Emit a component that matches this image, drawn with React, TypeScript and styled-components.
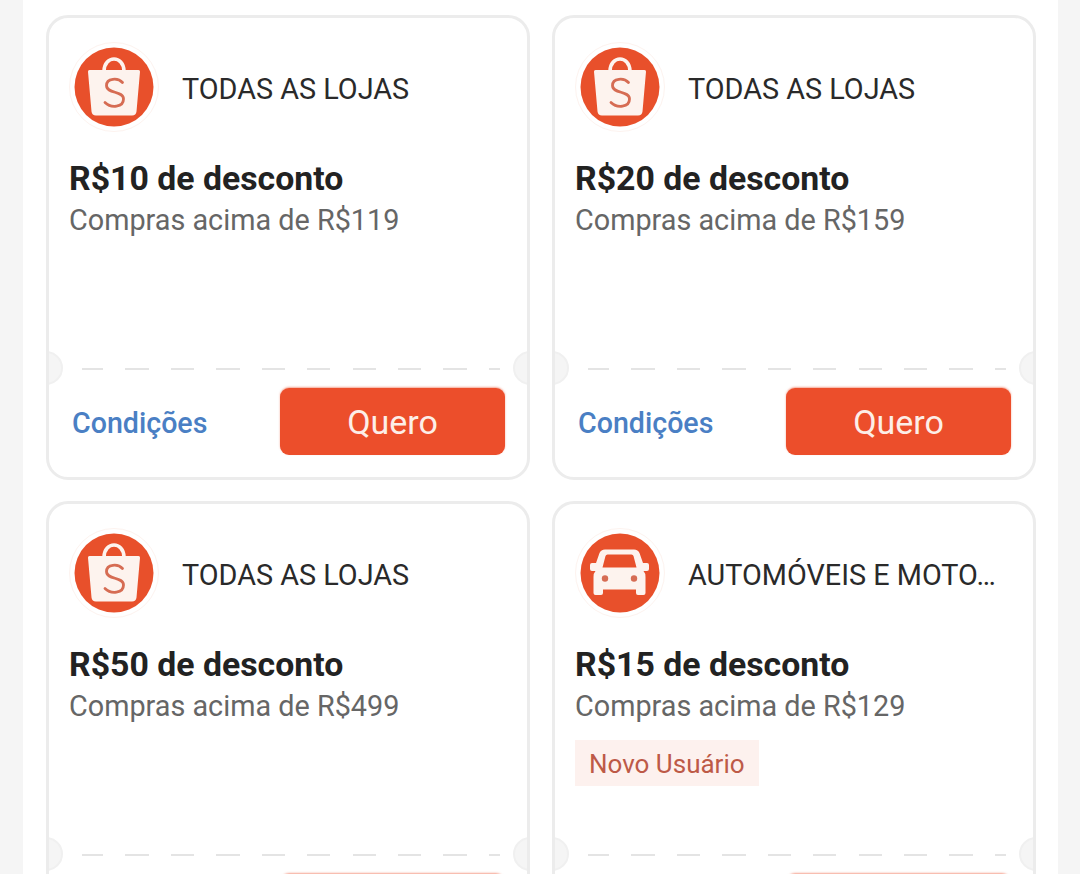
import React from "react";
import styled, { createGlobalStyle } from "styled-components";

const Global = createGlobalStyle`
  html, body { margin: 0; padding: 0; background: #f5f5f5; }
  body { font-family: Roboto, "Liberation Sans", sans-serif; }
`;

const Viewport = styled.div`
  width: 1080px;
  height: 874px;
  overflow: hidden;
  background: #f5f5f5;
`;

const Sheet = styled.main`
  width: 1035px;
  min-height: 874px;
  margin-left: 23px;
  padding: 15px 22px 0 23px;
  box-sizing: border-box;
  background: #fff;
  display: grid;
  grid-template-columns: 484px 484px;
  grid-auto-rows: 465px;
  column-gap: 22px;
  row-gap: 21px;
`;

const Card = styled.article`
  position: relative;
  box-sizing: border-box;
  border: 3px solid #ececec;
  border-radius: 22px;
  background: #fff;
  display: flex;
  flex-direction: column;
  overflow: hidden;
`;

const Body = styled.div`
  height: 350px;
  box-sizing: border-box;
  padding: 24px 21px 0 20px;
  flex: none;
`;

const Head = styled.div`
  display: flex;
  align-items: center;
  gap: 23px;
  height: 90px;
`;

const LogoRing = styled.div`
  flex: none;
  width: 90px;
  height: 90px;
  box-sizing: border-box;
  border-radius: 50%;
  border: 1px solid #fdf3ef;
  display: flex;
  align-items: center;
  justify-content: center;
`;

const Category = styled.div`
  margin-top: 3px;
  font-size: 28.8px;
  line-height: 34px;
  color: #2a2a2a;
  white-space: nowrap;
`;

const Title = styled.h2`
  margin: 26px 0 0;
  font-size: 33.8px;
  line-height: 42px;
  font-weight: 700;
  color: #222;
`;

const Sub = styled.p`
  margin: -1px 0 0;
  font-size: 28.8px;
  line-height: 42px;
  color: #666;
`;

const Tag = styled.span`
  display: inline-block;
  margin-top: 13px;
  padding: 0 14px;
  height: 46px;
  line-height: 49px;
  font-size: 26px;
  color: #bd5a47;
  background: #fdf1ee;
`;

const Divider = styled.div`
  position: relative;
  height: 0;
  flex: none;
  margin: 0 27px 0 33px;
  border-top: 2px solid transparent;
  border-image: repeating-linear-gradient(90deg, #e4e4e4 0 23px, transparent 23px 45px) 2;
`;

const Notch = styled.span<{ $side: "left" | "right" }>`
  position: absolute;
  top: 333px;
  ${(p) => p.$side}: -20px;
  width: 30px;
  height: 30px;
  border-radius: 50%;
  background: #f5f5f5;
  border: 2px solid #f0f0f0;
`;

const Footer = styled.div`
  flex: 1;
  display: flex;
  align-items: flex-start;
  justify-content: space-between;
  padding: 18px 22px 0 23px;
`;

const Link = styled.a`
  font-size: 28.6px;
  font-weight: 500;
  line-height: 70px;
  color: #4a7fc4;
`;

const Action = styled.button`
  width: 225px;
  height: 67px;
  border: 0;
  border-radius: 9px;
  background: #ec4e2b;
  box-shadow: 0 -1px 2px rgba(238, 79, 44, 0.5);
  color: #fdeee8;
  font-family: inherit;
  font-size: 34px;
  padding: 0;
`;

const Bag = () => (
  <svg width="80" height="80" viewBox="0 0 80 80">
    <circle cx="40" cy="40" r="39.5" fill="#e8502b" />
    <path d="M30 24 C30.5 8 49.5 8 50 24" fill="none" stroke="#fdf3ee" strokeWidth="3.6" />
    <path d="M15.5 23 H64.5 Q66.2 23 66 24.8 L62.5 64.5 Q62 68.5 58 68.5 H22 Q18 68.5 17.5 64.5 L14 24.8 Q13.8 23 15.5 23 Z" fill="#fdf3ee" />
    <path
      d="M48.5 35.5 C44 30.5 32.5 31 32.5 38.5 C32.5 47 49.5 43.5 49.5 52 C49.5 60.5 37 61.5 31 55.5"
      fill="none"
      stroke="#d66c53"
      strokeWidth="2.8"
      strokeLinecap="round"
    />
  </svg>
);

const Car = () => (
  <svg width="80" height="80" viewBox="0 0 80 80">
    <circle cx="40" cy="40" r="39.5" fill="#e8502b" />
    <path
      fillRule="evenodd"
      fill="#fdf3ee"
      d="M25 16.5 H54 Q58 16.5 59.5 20 L63 30 H67 Q69 30 69 32 V36 Q69 38 67 38 H63.5 Q65.5 40 65.5 44 V60 Q65.5 62 63.5 62 H58 Q56 62 56 60 V56.5 H23 V60 Q23 62 21 62 H15.5 Q13.5 62 13.5 60 V44 Q13.5 40 15.5 38 H12 Q10 38 10 36 V32 Q10 30 12 30 H16 L19.5 20 Q21 16.5 25 16.5 Z M27.5 21.5 Q26 21.5 25.5 23 L22.5 34.5 H56.5 L53.5 23 Q53 21.5 51.5 21.5 Z"
    />
    <circle cx="25" cy="45.5" r="3.2" fill="#d66c53" />
    <circle cx="54" cy="45.5" r="3.2" fill="#d66c53" />
  </svg>
);

type Voucher = { id: number; car?: boolean; category: string; title: string; sub: string; tag?: string };

const vouchers: Voucher[] = [
  { id: 1, category: "TODAS AS LOJAS", title: "R$10 de desconto", sub: "Compras acima de R$119" },
  { id: 2, category: "TODAS AS LOJAS", title: "R$20 de desconto", sub: "Compras acima de R$159" },
  { id: 3, category: "TODAS AS LOJAS", title: "R$50 de desconto", sub: "Compras acima de R$499" },
  { id: 4, car: true, category: "AUTOMÓVEIS E MOTO…", title: "R$15 de desconto", sub: "Compras acima de R$129", tag: "Novo Usuário" },
];

export default function App() {
  return (
    <Viewport>
      <Global />
      <Sheet>
        {vouchers.map((v) => (
          <Card key={v.id}>
            <Body>
              <Head>
                <LogoRing>{v.car ? <Car /> : <Bag />}</LogoRing>
                <Category>{v.category}</Category>
              </Head>
              <Title>{v.title}</Title>
              <Sub>{v.sub}</Sub>
              {v.tag && <Tag>{v.tag}</Tag>}
            </Body>
            <Divider />
            <Notch $side="left" />
            <Notch $side="right" />
            <Footer>
              <Link>Condições</Link>
              <Action>Quero</Action>
            </Footer>
          </Card>
        ))}
      </Sheet>
    </Viewport>
  );
}
